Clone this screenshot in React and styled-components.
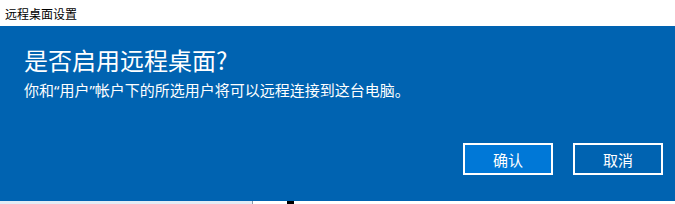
import React from 'react';
import styled, { createGlobalStyle } from 'styled-components';

const GlobalStyle = createGlobalStyle`
  html, body {
    margin: 0;
    padding: 0;
    background: #ffffff;
  }
  body {
    width: 675px;
    height: 204px;
    overflow: hidden;
    font-family: 'Noto Sans CJK SC', 'Noto Sans', sans-serif;
  }
`;

const Window = styled.div`
  display: flex;
  flex-direction: column;
  width: 675px;
  height: 204px;
`;

const TitleBar = styled.div`
  height: 26px;
  padding-left: 5px;
  display: flex;
  align-items: center;
  font-size: 12px;
  color: #000;
  background: #fff;
`;

const Dialog = styled.div`
  height: 175px;
  box-sizing: border-box;
  background: #0063b1;
  color: #fff;
  padding: 17px 12px 0 24px;
  display: flex;
  flex-direction: column;
`;

const Heading = styled.h1`
  margin: 0;
  font-size: 24px;
  font-weight: 400;
  line-height: 34px;
`;

const Message = styled.p`
  margin: 3px 0 0;
  font-size: 15px;
  line-height: 20px;
`;

const Quote = styled.span`
  font-family: 'Noto Sans', sans-serif;
`;

const ButtonRow = styled.div`
  display: flex;
  justify-content: flex-end;
  gap: 20px;
  margin-top: 43px;
`;

const Button = styled.button`
  width: 90px;
  height: 32px;
  box-sizing: border-box;
  border: 2px solid #fff;
  background: ${(props) => (props.primary ? '#0078d7' : '#0063b1')};
  color: #fff;
  font-family: inherit;
  font-size: 15px;
  padding: 0;
`;

const Footer = styled.div`
  flex: 1;
  display: flex;
`;

const FooterLeft = styled.div`
  width: 252px;
  background: #e3ecf5;
  border-right: 1px solid #8a99a8;
`;

const FooterRight = styled.div`
  flex: 1;
  background: #fff;
  padding-left: 34px;
`;

const Caret = styled.div`
  width: 7px;
  height: 100%;
  background: #000;
`;

export default function App() {
  return (
    <Window>
      <GlobalStyle />
      <TitleBar>远程桌面设置</TitleBar>
      <Dialog>
        <Heading>是否启用远程桌面?</Heading>
        <Message>
          你和<Quote>“</Quote>用户<Quote>”</Quote>帐户下的所选用户将可以远程连接到这台电脑。
        </Message>
        <ButtonRow>
          <Button primary>确认</Button>
          <Button>取消</Button>
        </ButtonRow>
      </Dialog>
      <Footer>
        <FooterLeft />
        <FooterRight>
          <Caret />
        </FooterRight>
      </Footer>
    </Window>
  );
}
